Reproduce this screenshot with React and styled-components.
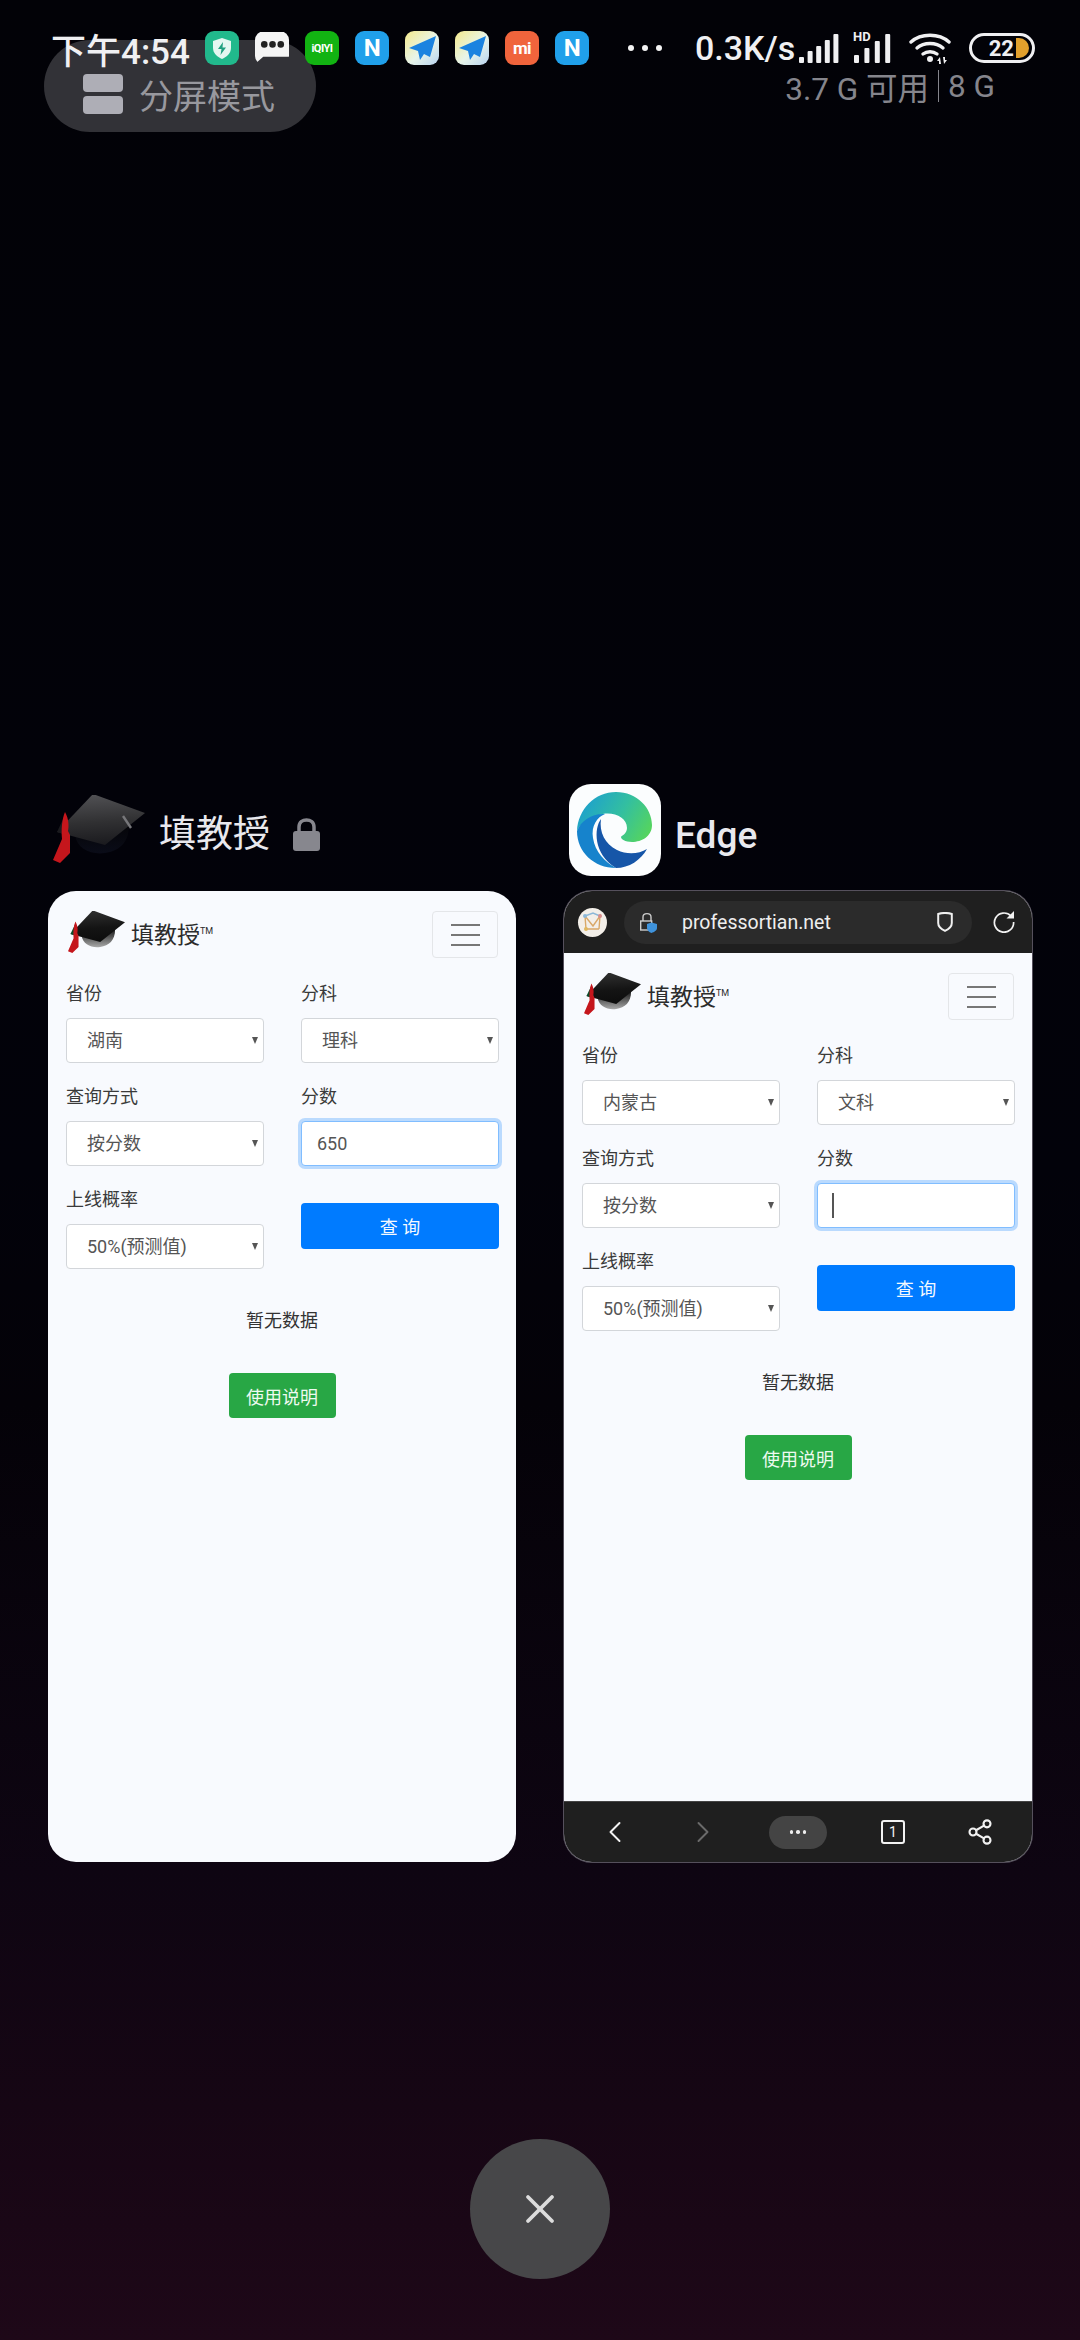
import React from 'react'
import styled, { createGlobalStyle } from 'styled-components'
import { ChevronLeft, ChevronRight, Share2, X } from 'lucide-react'

const GlobalStyle = createGlobalStyle`
    html, body {
        margin: 0;
        padding: 0;
        background: #020207;
    }
    * {
        box-sizing: border-box;
    }
`

const Screen = styled.div`
    position: relative;
    width: 1080px;
    height: 2340px;
    overflow: hidden;
    padding-top: 40px;
    font-family: Roboto, "Noto Sans CJK SC", sans-serif;
    background: linear-gradient(180deg, #020207 0%, #02020a 50%, #040208 60%, #0e0512 80%, #160614 90%, #1e0818 100%);
`

const StatusBar = styled.div`
    position: absolute;
    top: 31px;
    left: 51px;
    height: 34px;
    display: flex;
    align-items: center;
    color: #f0f0f2;
`

const Time = styled.div`
    width: 154px;
    font-size: 35px;
    font-weight: 500;
    white-space: nowrap;
`

const NotifyIcons = styled.div`
    display: flex;
    gap: 16px;
`

const AppTile = styled.div`
    width: 34px;
    height: 34px;
    border-radius: 9px;
    background: ${p => p.$bg};
    display: flex;
    align-items: center;
    justify-content: center;
    color: #fff;
    font-weight: 700;
    font-size: ${p => p.$size || 15}px;
    overflow: hidden;
    letter-spacing: -0.5px;
`

const MoreDots = styled.div`
    display: flex;
    gap: 8px;
    margin-left: 39px;
    margin-right: 33px;
`

const Dot = styled.span`
    width: 6px;
    height: 6px;
    border-radius: 50%;
    background: #f4f4f4;
`

const Speed = styled.div`
    width: 104px;
    font-size: 34px;
    font-weight: 500;
    white-space: nowrap;
`

const SignalWrap = styled.div`
    position: relative;
    margin-left: ${p => p.$gap || 0}px;
    height: 30px;
`

const HdMark = styled.span`
    position: absolute;
    top: -3px;
    left: 0;
    font-size: 13px;
    font-weight: 700;
    line-height: 13px;
`

const Battery = styled.div`
    width: 66px;
    height: 30px;
    margin-left: 18px;
    border: 3px solid #f0f0f2;
    border-radius: 15px;
    display: flex;
    align-items: center;
    justify-content: flex-end;
    padding-right: 3px;
    font-size: 22px;
    font-weight: 700;
`

const BatteryFill = styled.span`
    width: 13px;
    height: 20px;
    margin-left: 2px;
    border-radius: 0 10px 10px 0;
    background: #e2a02c;
`

const TopRow = styled.div`
    height: 92px;
    padding: 0 85px 0 44px;
    display: flex;
    justify-content: space-between;
`

const SplitPill = styled.div`
    width: 272px;
    height: 92px;
    border-radius: 46px;
    background: #323237;
    display: flex;
    align-items: center;
    gap: 16px;
    padding: 16px 0 0 39px;
    color: #98989e;
    font-size: 34px;
`

const SplitIcon = styled.div`
    display: flex;
    flex-direction: column;
    gap: 4px;
`

const SplitBar = styled.span`
    display: block;
    width: 40px;
    height: 18px;
    border-radius: 4px;
    background: #aeaeb6;
`

const MemoryInfo = styled.div`
    margin-top: 28px;
    height: 36px;
    display: flex;
    align-items: center;
    color: #85858c;
    font-size: 31.5px;
    white-space: nowrap;
`

const MemoryLine = styled.span`
    width: 1px;
    height: 32px;
    margin: 0 9px 0 9px;
    background: #85858c;
`

const CardsRow = styled.div`
    margin-top: 652px;
    padding: 0 48px;
    display: grid;
    grid-template-columns: 468px 468px;
    gap: 48px;
`

const Column = styled.div`
    display: flex;
    flex-direction: column;
`

const AppHeader = styled.div`
    height: 92px;
    margin-bottom: 15px;
    display: flex;
    align-items: center;
    padding-left: ${p => p.$left}px;
`

const AppName = styled.div`
    margin-left: ${p => p.$gap}px;
    font-size: 37px;
    font-weight: ${p => p.$weight || 400};
    color: #e9e9ee;
    line-height: 1;
    padding-top: ${p => p.$top || 0}px;
`

const LockWrap = styled.div`
    margin-left: 23px;
    margin-top: 9px;
    display: flex;
`

const EdgeTile = styled.div`
    width: 92px;
    height: 92px;
    border-radius: 22px;
    background: #fbfdfe;
    display: flex;
`

const Card = styled.div`
    height: 971px;
    border-radius: 28px;
    overflow: hidden;
    background: #f8fafe;
    display: flex;
    flex-direction: column;
    box-shadow: ${p => (p.$framed ? '0 0 0 1px #55505c' : 'none')};
`

const PageBody = styled.div`
    flex: 1;
    padding: 20px 18px 0;
    color: #333;
`

const NavBar = styled.div`
    height: 47px;
    display: flex;
    align-items: center;
    justify-content: space-between;
`

const Brand = styled.div`
    display: flex;
    align-items: center;
    margin-left: 2px;
    margin-top: -3px;
    font-size: 23px;
    color: #2c2c2c;
`

const BrandName = styled.span`
    margin-left: 6px;
`

const Trade = styled.sup`
    font-size: 9px;
    line-height: 1;
    position: relative;
    top: -1px;
    vertical-align: top;
`

const Toggler = styled.div`
    width: 66px;
    height: 47px;
    border: 1px solid #e4e6e9;
    border-radius: 4px;
    display: flex;
    flex-direction: column;
    align-items: center;
    justify-content: center;
    gap: 8px;
`

const TogglerLine = styled.span`
    width: 29px;
    height: 2px;
    background: #777;
`

const FormGrid = styled.div`
    margin-top: 22px;
    display: grid;
    grid-template-columns: 198px 198px;
    gap: 37px;
`

const FormColumn = styled.div`
    display: flex;
    flex-direction: column;
    gap: 20px;
`

const Field = styled.div`
    display: flex;
    flex-direction: column;
    gap: 11px;
`

const Label = styled.label`
    height: 27px;
    font-size: 18px;
    line-height: 27px;
    color: #3a3a3a;
`

const SelectWrap = styled.div`
    position: relative;
    &::after {
        content: '';
        position: absolute;
        right: 6px;
        top: 19px;
        border-left: 3.5px solid transparent;
        border-right: 3.5px solid transparent;
        border-top: 7px solid #555;
    }
`

const Select = styled.select`
    width: 100%;
    height: 45px;
    appearance: none;
    background: #fff;
    border: 1px solid #d3d6da;
    border-radius: 4px;
    padding: 0 0 0 20px;
    font-family: Roboto, "Noto Sans CJK SC", sans-serif;
    font-size: 18px;
    color: #555;
`

const InputWrap = styled.div`
    position: relative;
`

const NumberInput = styled.input`
    width: 100%;
    height: 45px;
    background: #fff;
    border: 1px solid #80bdff;
    border-radius: 4px;
    box-shadow: 0 0 0 3px rgba(0, 123, 255, 0.25);
    padding: 0 15px;
    font-family: Roboto, "Noto Sans CJK SC", sans-serif;
    font-size: 18px;
    color: #555;
    outline: none;
`

const Caret = styled.span`
    position: absolute;
    left: 15px;
    top: 10px;
    width: 1.5px;
    height: 25px;
    background: #555;
`

const QueryButton = styled.div`
    height: 46px;
    margin-top: 17px;
    border-radius: 4px;
    background: #007bff;
    color: #f4f9ff;
    font-size: 18px;
    display: flex;
    align-items: center;
    justify-content: center;
`

const EmptyText = styled.div`
    margin-top: 38px;
    height: 27px;
    text-align: center;
    font-size: 18px;
    line-height: 27px;
    color: #333;
`

const HelpButton = styled.div`
    width: 107px;
    height: 45px;
    margin: 39px auto 0;
    border-radius: 4px;
    background: #28a745;
    color: #eefaf0;
    font-size: 18px;
    display: flex;
    align-items: center;
    justify-content: center;
`

const BrowserTop = styled.div`
    height: 62px;
    background: #1f1f1f;
    display: flex;
    align-items: center;
    padding: 0 17px 0 14px;
`

const SiteAvatar = styled.div`
    width: 29px;
    height: 29px;
    border-radius: 50%;
    background: #f3efe9;
    display: flex;
`

const UrlPill = styled.div`
    width: 348px;
    height: 43px;
    margin-left: 17px;
    border-radius: 22px;
    background: #2b2b2b;
    display: flex;
    align-items: center;
    padding: 0 19px 0 16px;
    color: #eee;
    font-size: 19.5px;
`

const UrlText = styled.span`
    flex: 1;
    margin-left: 25px;
`

const ReloadWrap = styled.div`
    margin-left: 21px;
    display: flex;
`

const BrowserBottom = styled.div`
    height: 61px;
    background: #1f1f1f;
    border-top: 1px solid #444;
    display: grid;
    grid-template-columns: 92px 84px 106px 84px 90px;
    padding-left: 5px;
    align-items: center;
    justify-items: center;
    color: #f2f2f2;
`

const MenuPill = styled.div`
    width: 58px;
    height: 33px;
    border-radius: 17px;
    background: #444;
    display: flex;
    align-items: center;
    justify-content: center;
    gap: 3px;
`

const MenuDot = styled.span`
    width: 3.5px;
    height: 3.5px;
    border-radius: 50%;
    background: #eee;
`

const TabCount = styled.div`
    width: 24px;
    height: 24px;
    border: 2px solid #f2f2f2;
    border-radius: 3px;
    display: flex;
    align-items: center;
    justify-content: center;
    font-size: 14px;
`

const CloseButton = styled.div`
    width: 140px;
    height: 140px;
    margin: 277px auto 0;
    border-radius: 50%;
    background: #474749;
    display: flex;
    align-items: center;
    justify-content: center;
    color: #dcdcdc;
`

const HatIcon = ({ width, dim }) => {
    const id = dim ? 'hatDim' : 'hatBright'
    return (
        <svg width={width} viewBox="0 0 92 70">
            <defs>
                <linearGradient id={id} x1="0.45" y1="0" x2="0.55" y2="1">
                    <stop offset="0" stopColor={dim ? '#515154' : '#303030'} />
                    <stop offset="0.55" stopColor={dim ? '#303032' : '#141414'} />
                    <stop offset="1" stopColor={dim ? '#1a1a1e' : '#0c0c0c'} />
                </linearGradient>
                <linearGradient id={`${id}Body`} x1="0" y1="0" x2="0" y2="1">
                    <stop offset="0" stopColor={dim ? '#050508' : '#1a1a1a'} />
                    <stop offset="1" stopColor={dim ? '#0a0c18' : '#a8a8a8'} />
                </linearGradient>
            </defs>
            <path d="M22 40 C24 54 38 60 52 58 C66 56 76 48 76 30 L50 46 Z" fill={`url(#${id}Body)`} />
            <path d="M40 -1 L92 18 L52 50 L4 37 Z" fill={`url(#${id})`} />
            {dim && <path d="M70 21 L78 33" stroke="#77777a" strokeWidth="2.4" />}
            <path d="M4 37 L12 20 L16 41 Z" fill={dim ? '#1a1a1e' : '#0a4a2a'} />
            <path d="M12 17 C16 24 16 32 15 36 L17 40 L17 58 L7 68 L0 65 L9 44 C8 34 9 24 12 17 Z" fill="#c5161c" />
        </svg>
    )
}

const EdgeLogo = () => (
    <svg width="92" height="92" viewBox="0 0 92 92">
        <defs>
            <linearGradient id="edgeTop" x1="0" y1="0.3" x2="1" y2="0.7">
                <stop offset="0" stopColor="#1c9fd0" />
                <stop offset="0.55" stopColor="#33bfa0" />
                <stop offset="1" stopColor="#55d45f" />
            </linearGradient>
        </defs>
        <path d="M8 47C9 25 26 8 47 8C68 8 83 24 83 41C83 52 73 58 63 58C56 58 52 55 52 53C52 52 58 50 58 44C58 34 46 28 34 30C22 32 12 38 8 47Z" fill="url(#edgeTop)" />
        <path d="M8 47C12 36 24 29 36 30C28 33 22 42 24 54C26 68 36 78 47 84C25 84 8 68 8 47Z" fill="#1683cc" />
        <path d="M32 35C25 44 24 70 47 84C60 84 72 76 78 65C70 70 58 71 48 66C36 60 30 48 32 35Z" fill="#1656a8" />
    </svg>
)

const PlaneTile = () => (
    <AppTile $bg="linear-gradient(135deg, #f5e98c, #e8f5ea 55%, #b8d4f0)">
        <svg width="27" height="24" viewBox="0 0 27 24">
            <path d="M27 0 L0 12 L9 15 L11 24 L15 18 L21 21 Z" fill="#1b83e0" />
        </svg>
    </AppTile>
)

const PageContent = ({ province, subject, focusValue }) => (
    <PageBody>
        <NavBar>
            <Brand>
                <HatIcon width={57} />
                <BrandName>填教授</BrandName>
                <Trade>TM</Trade>
            </Brand>
            <Toggler>
                <TogglerLine />
                <TogglerLine />
                <TogglerLine />
            </Toggler>
        </NavBar>
        <FormGrid>
            <FormColumn>
                <Field>
                    <Label>省份</Label>
                    <SelectWrap>
                        <Select defaultValue={province}><option>{province}</option></Select>
                    </SelectWrap>
                </Field>
                <Field>
                    <Label>查询方式</Label>
                    <SelectWrap>
                        <Select defaultValue="按分数"><option>按分数</option></Select>
                    </SelectWrap>
                </Field>
                <Field>
                    <Label>上线概率</Label>
                    <SelectWrap>
                        <Select defaultValue="50%(预测值)"><option>50%(预测值)</option></Select>
                    </SelectWrap>
                </Field>
            </FormColumn>
            <FormColumn>
                <Field>
                    <Label>分科</Label>
                    <SelectWrap>
                        <Select defaultValue={subject}><option>{subject}</option></Select>
                    </SelectWrap>
                </Field>
                <Field>
                    <Label>分数</Label>
                    <InputWrap>
                        <NumberInput defaultValue={focusValue} />
                        {!focusValue && <Caret />}
                    </InputWrap>
                </Field>
                <QueryButton>查 询</QueryButton>
            </FormColumn>
        </FormGrid>
        <EmptyText>暂无数据</EmptyText>
        <HelpButton>使用说明</HelpButton>
    </PageBody>
)

const Bars = ({ count }) => {
    const hs = count === 5 ? [6, 12, 17, 23, 29] : [8, 15, 22, 29]
    const step = count === 5 ? 8.6 : 10.4
    return (
        <svg width="40" height="30" viewBox="0 0 40 30">
            {hs.map((h, i) => (
                <rect key={i} x={i * step + (count === 5 ? 0 : 1)} y={30 - h} width="5" height={h} rx="1" fill="#f0f0f2" />
            ))}
        </svg>
    )
}

const App = () => (
    <Screen>
        <GlobalStyle />
        <TopRow>
            <SplitPill>
                <SplitIcon>
                    <SplitBar />
                    <SplitBar />
                </SplitIcon>
                <span>分屏模式</span>
            </SplitPill>
            <MemoryInfo>
                <span>3.7 G 可用</span>
                <MemoryLine />
                <span>8 G</span>
            </MemoryInfo>
        </TopRow>

        <StatusBar>
            <Time>下午4:54</Time>
            <NotifyIcons>
                <AppTile $bg="#21b98c">
                    <svg width="20" height="23" viewBox="0 0 20 23">
                        <path d="M10 1 L19 4 V11 C19 17 14 20 10 22 C6 20 1 17 1 11 V4 Z" fill="#e4f7f1" />
                        <path d="M11 5 L6 12 H9.5 L8.5 18 L14 10.5 H10.5 Z" fill="#21a080" />
                    </svg>
                </AppTile>
                <AppTile $bg="transparent">
                    <svg width="34" height="34" viewBox="0 0 33 33">
                        <path d="M0 1 H33 V25 H8 L0 32 Z" fill="#f5f5f5" />
                        <circle cx="9" cy="13" r="3.2" fill="#222" />
                        <circle cx="17" cy="13" r="3.2" fill="#222" />
                        <circle cx="25" cy="13" r="3.2" fill="#222" />
                    </svg>
                </AppTile>
                <AppTile $bg="#12b312" $size={11}>iQIYI</AppTile>
                <AppTile $bg="#20a0ea" $size={24}>N</AppTile>
                <PlaneTile />
                <PlaneTile />
                <AppTile $bg="#f0643c" $size={17}>mi</AppTile>
                <AppTile $bg="#20a0ea" $size={24}>N</AppTile>
            </NotifyIcons>
            <MoreDots>
                <Dot />
                <Dot />
                <Dot />
            </MoreDots>
            <Speed>0.3K/s</Speed>
            <Bars count={5} />
            <SignalWrap $gap={14}>
                <HdMark>HD</HdMark>
                <Bars count={4} />
            </SignalWrap>
            <svg width="42" height="32" viewBox="0 0 42 32" style={{ marginLeft: 16 }}>
                <path d="M2 10 C12 1 30 1 40 10" fill="none" stroke="#f0f0f2" strokeWidth="3.4" strokeLinecap="round" />
                <path d="M8 16 C15 10 27 10 34 16" fill="none" stroke="#f0f0f2" strokeWidth="3.4" strokeLinecap="round" />
                <path d="M14 22 C18 19 24 19 28 22" fill="none" stroke="#f0f0f2" strokeWidth="3.4" strokeLinecap="round" />
                <circle cx="21" cy="27" r="3" fill="#f0f0f2" />
                <path d="M31 25 L28 29 H30 V32 H32 Z M35 32 L38 28 H36 V25 H34 Z" fill="#f0f0f2" />
            </svg>
            <Battery>
                22
                <BatteryFill />
            </Battery>
        </StatusBar>

        <CardsRow>
            <Column>
                <AppHeader $left={5}>
                    <HatIcon width={92} dim />
                    <AppName $gap={14} $top={8}>填教授</AppName>
                    <LockWrap>
                        <svg width="27" height="33" viewBox="0 0 27 33">
                            <path d="M6 14 V9 C6 -0.5 21 -0.5 21 9 V14" fill="none" stroke="#87878e" strokeWidth="3.5" />
                            <rect x="0" y="13" width="27" height="20" rx="3" fill="#87878e" />
                        </svg>
                    </LockWrap>
                </AppHeader>
                <Card>
                    <PageContent province="湖南" subject="理科" focusValue="650" />
                </Card>
            </Column>

            <Column>
                <AppHeader $left={5}>
                    <EdgeTile>
                        <EdgeLogo />
                    </EdgeTile>
                    <AppName $gap={14} $weight={500} $top={10}>Edge</AppName>
                </AppHeader>
                <Card $framed>
                    <BrowserTop>
                        <SiteAvatar>
                            <svg width="29" height="29" viewBox="0 0 29 29">
                                <path d="M7 8 L8 21 M7 8 L15 18 L22 8 L21 21 M8 21 H21" fill="none" stroke="#d9a868" strokeWidth="1.4" />
                                <path d="M7 8 L15 5 L22 8" fill="none" stroke="#8cb8d8" strokeWidth="1.4" />
                                <circle cx="7" cy="8" r="2" fill="#8cb8d8" />
                                <circle cx="22" cy="8" r="2" fill="#d88c8c" />
                                <circle cx="8" cy="21" r="2" fill="#e0b860" />
                            </svg>
                        </SiteAvatar>
                        <UrlPill>
                            <svg width="17" height="21" viewBox="0 0 17 21">
                                <path d="M3 9 V5 C3 0.5 11 0.5 11 5 V9" fill="none" stroke="#ccc" strokeWidth="1.4" />
                                <rect x="0.7" y="9" width="11" height="9" fill="none" stroke="#ccc" strokeWidth="1.4" />
                                <path d="M11.5 10.5 L17 12 V16 C17 18.5 14 20 11.5 21 C9 20 7 18.5 7 16 V12 Z" fill="#3f93dc" />
                            </svg>
                            <UrlText>professortian.net</UrlText>
                            <svg width="16" height="20" viewBox="0 0 16 20">
                                <path d="M1.2 2 C5 0.8 11 0.8 14.8 2 V11 C14.8 15 11 17.5 8 18.8 C5 17.5 1.2 15 1.2 11 Z" fill="none" stroke="#f0f0f0" strokeWidth="2" />
                            </svg>
                        </UrlPill>
                        <ReloadWrap>
                            <svg width="22" height="22" viewBox="0 0 22 22">
                                <path d="M18 5 A9.6 9.6 0 1 0 20.6 11" fill="none" stroke="#f2f2f2" strokeWidth="1.7" />
                                <path d="M21 0 V7.5 H13.5 Z" fill="#f2f2f2" />
                            </svg>
                        </ReloadWrap>
                    </BrowserTop>
                    <PageContent province="内蒙古" subject="文科" focusValue="" />
                    <BrowserBottom>
                        <ChevronLeft size={36} strokeWidth={1.3} />
                        <ChevronRight size={36} strokeWidth={1.3} color="#6a6a6a" />
                        <MenuPill>
                            <MenuDot />
                            <MenuDot />
                            <MenuDot />
                        </MenuPill>
                        <TabCount>1</TabCount>
                        <Share2 size={28} strokeWidth={1.8} />
                    </BrowserBottom>
                </Card>
            </Column>
        </CardsRow>

        <CloseButton>
            <X size={48} strokeWidth={1.9} />
        </CloseButton>
    </Screen>
)

export default App
